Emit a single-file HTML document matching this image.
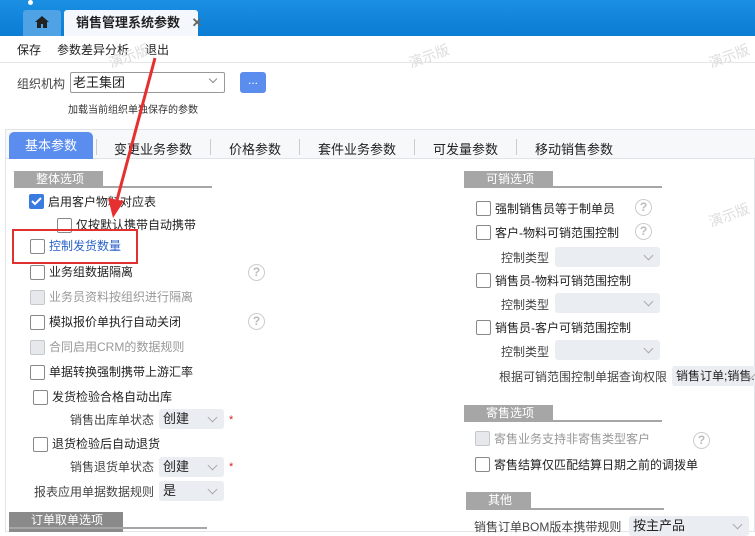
<!DOCTYPE html>
<html><head><meta charset="utf-8"><style>
*{box-sizing:border-box;margin:0;padding:0}
body{width:755px;height:532px;overflow:hidden;background:#fff;font-family:"Liberation Sans","Noto Sans CJK SC",sans-serif;font-size:12px;color:#222;position:relative}
.a{position:absolute;white-space:nowrap}
.cb{position:absolute;width:15px;height:15px;border:1px solid #888;border-radius:2px;background:#fff}
.cb.d{background:#e6e8ec;border-color:#c5c8cc}
.cb.on{background:#3a7be0;border-color:#3a7be0}
.sec{position:absolute;height:16px;background:#a6a6a6;color:#fff;font-size:12px;line-height:16px;padding-left:22px}
.secl{position:absolute;height:2px;background:#a6a6a6}
.sel{position:absolute;height:20px;background:#eaedf2;border-radius:3px;font-size:13px;line-height:20px;padding-left:4px;color:#222}
.sel:after{content:"";position:absolute;right:8px;top:5px;width:6px;height:6px;border-right:1px solid #aaa;border-bottom:1px solid #aaa;transform:rotate(45deg)}
.q{position:absolute;width:17px;height:17px;border:1.5px solid #ccc;border-radius:50%;color:#bbb;font-size:12px;font-weight:bold;text-align:center;line-height:14px}
.g{color:#999}
.star{position:absolute;color:#d22;font-size:11px}
</style></head><body>
<div class="a" style="left:0;top:0;width:755px;height:36px;background:linear-gradient(#1b8fe2,#0a7dd4)"></div>
<div class="a" style="left:28px;top:0;width:5px;height:5px;border-radius:50%;background:#fff"></div>
<div class="a" style="left:23px;top:10px;width:38px;height:26px;background:#4fa3e4;border-radius:3px 3px 0 0"></div>
<svg class="a" style="left:35px;top:16px" width="14" height="12" viewBox="0 0 14 12"><path d="M7 0L0 6h2v6h4V8h2v4h4V6h2z" fill="#222"/></svg>
<div class="a" style="left:64px;top:10px;width:134px;height:26px;background:#f4f8fc;border-radius:3px 3px 0 0;font-size:13px;line-height:25px;padding-left:12px;font-weight:bold;color:#222">销售管理系统参数 <span style="color:#666;margin-left:8px;font-size:13px">✕</span></div>
<div class="a" style="left:0;top:62px;width:755px;height:1px;background:#e4e6ea"></div>
<div class="a" style="left:17px;top:41px">保存</div>
<div class="a" style="left:57px;top:41px">参数差异分析</div>
<div class="a" style="left:145px;top:41px">退出</div>
<div class="a" style="left:17px;top:75px;color:#444">组织机构</div>
<div class="a" style="left:70px;top:72px;width:155px;height:21px;border:1px solid #999;border-radius:2px;font-size:13px;line-height:19px;padding-left:2px">老王集团</div>
<div class="a" style="left:210px;top:76px;width:6px;height:6px;border-right:1px solid #888;border-bottom:1px solid #888;transform:rotate(45deg)"></div>
<div class="a" style="left:240px;top:72px;width:26px;height:21px;background:#5b8def;border-radius:3px;color:#fff;text-align:center;line-height:17px">...</div>
<div class="a" style="left:68px;top:101px;font-size:10px;color:#333">加载当前组织单独保存的参数</div>
<div class="a" style="left:5px;top:129px;width:750px;height:403px;border:1px solid #e0e3e8;background:#fff"></div>
<div class="a" style="left:6px;top:130px;width:749px;height:29px;background:#f7f8fa;border-bottom:1px solid #e0e3e8"></div>
<div class="a" style="left:9px;top:132px;width:84px;height:27px;background:#5b8def;border-radius:5px 5px 0 0;color:#fff;font-size:13px;line-height:27px;text-align:center">基本参数</div>
<div class="a" style="left:114px;top:139px;font-size:13px">变更业务参数</div>
<div class="a" style="left:229px;top:139px;font-size:13px">价格参数</div>
<div class="a" style="left:318px;top:139px;font-size:13px">套件业务参数</div>
<div class="a" style="left:433px;top:139px;font-size:13px">可发量参数</div>
<div class="a" style="left:535px;top:139px;font-size:13px">移动销售参数</div>
<div class="a" style="left:96px;top:139px;width:1px;height:16px;background:#ccc"></div>
<div class="a" style="left:210px;top:139px;width:1px;height:16px;background:#ccc"></div>
<div class="a" style="left:299px;top:139px;width:1px;height:16px;background:#ccc"></div>
<div class="a" style="left:414px;top:139px;width:1px;height:16px;background:#ccc"></div>
<div class="a" style="left:516px;top:139px;width:1px;height:16px;background:#ccc"></div>

<!-- left -->
<div class="sec" style="left:14px;top:171px;width:89px">整体选项</div><div class="secl" style="left:14px;top:186px;width:198px"></div>
<div class="cb on" style="left:29px;top:194px"></div><svg class="a" style="left:31px;top:197px" width="11" height="9"><path d="M1 4l3 3 6-6" stroke="#fff" stroke-width="2" fill="none"/></svg>
<div class="a" style="left:48px;top:193px">启用客户物料对应表</div>
<div class="cb" style="left:57px;top:218px"></div><div class="a" style="left:76px;top:216px">仅按默认携带自动携带</div>
<div class="cb" style="left:30px;top:239px"></div><div class="a" style="left:49px;top:237px;color:#2a62c9">控制发货数量</div>
<div class="cb" style="left:30px;top:265px"></div><div class="a" style="left:49px;top:263px">业务组数据隔离</div><div class="q" style="left:248px;top:264px">?</div>
<div class="cb d" style="left:30px;top:290px"></div><div class="a g" style="left:49px;top:288px">业务员资料按组织进行隔离</div>
<div class="cb" style="left:30px;top:315px"></div><div class="a" style="left:49px;top:313px">模拟报价单执行自动关闭</div><div class="q" style="left:248px;top:313px">?</div>
<div class="cb d" style="left:30px;top:340px"></div><div class="a g" style="left:49px;top:338px">合同启用CRM的数据规则</div>
<div class="cb" style="left:30px;top:365px"></div><div class="a" style="left:49px;top:363px">单据转换强制携带上游汇率</div>
<div class="cb" style="left:33px;top:390px"></div><div class="a" style="left:52px;top:388px">发货检验合格自动出库</div>
<div class="a" style="left:70px;top:411px;color:#444">销售出库单状态</div><div class="sel" style="left:159px;top:409px;width:65px">创建</div><div class="star" style="left:229px;top:414px">*</div>
<div class="cb" style="left:33px;top:437px"></div><div class="a" style="left:52px;top:435px">退货检验后自动退货</div>
<div class="a" style="left:70px;top:458px;color:#444">销售退货单状态</div><div class="sel" style="left:159px;top:457px;width:65px">创建</div><div class="star" style="left:229px;top:461px">*</div>
<div class="a" style="left:34px;top:483px;color:#444">报表应用单据数据规则</div><div class="sel" style="left:159px;top:481px;width:65px">是</div>
<div class="sec" style="left:9px;top:512px;width:114px;height:20px;background:#8a8a8a">订单取单选项</div><div class="secl" style="left:9px;top:527px;width:198px"></div>

<!-- right -->
<div class="sec" style="left:464px;top:171px;width:89px">可销选项</div><div class="secl" style="left:464px;top:186px;width:198px"></div>
<div class="cb" style="left:476px;top:201px"></div><div class="a" style="left:495px;top:200px">强制销售员等于制单员</div><div class="q" style="left:635px;top:199px">?</div>
<div class="cb" style="left:476px;top:225px"></div><div class="a" style="left:495px;top:224px">客户-物料可销范围控制</div><div class="q" style="left:635px;top:223px">?</div>
<div class="a" style="left:501px;top:249px;color:#444">控制类型</div><div class="sel" style="left:555px;top:247px;width:105px"></div>
<div class="cb" style="left:476px;top:273px"></div><div class="a" style="left:495px;top:272px">销售员-物料可销范围控制</div>
<div class="a" style="left:501px;top:296px;color:#444">控制类型</div><div class="sel" style="left:555px;top:293px;width:105px"></div>
<div class="cb" style="left:476px;top:320px"></div><div class="a" style="left:495px;top:319px">销售员-客户可销范围控制</div>
<div class="a" style="left:501px;top:343px;color:#444">控制类型</div><div class="sel" style="left:555px;top:340px;width:105px"></div>
<div class="a" style="left:499px;top:368px;color:#444">根据可销范围控制单据查询权限</div><div class="sel" style="left:672px;top:366px;width:90px;font-size:12px">销售订单;销售..</div>
<div class="sec" style="left:464px;top:405px;width:89px">寄售选项</div><div class="secl" style="left:464px;top:420px;width:198px"></div>
<div class="cb d" style="left:475px;top:431px"></div><div class="a g" style="left:494px;top:430px">寄售业务支持非寄售类型客户</div><div class="q" style="left:693px;top:432px">?</div>
<div class="cb" style="left:475px;top:457px"></div><div class="a" style="left:494px;top:456px">寄售结算仅匹配结算日期之前的调拨单</div>
<div class="sec" style="left:466px;top:492px;width:65px">其他</div><div class="secl" style="left:466px;top:508px;width:198px"></div>
<div class="a" style="left:474px;top:518px;color:#444">销售订单BOM版本携带规则</div><div class="sel" style="left:629px;top:516px;width:120px">按主产品</div>

<!-- watermarks -->
<div class="a" style="left:108px;top:46px;color:#ddd;font-size:14px;transform:rotate(-20deg)">演示版</div>
<div class="a" style="left:408px;top:46px;color:#ddd;font-size:14px;transform:rotate(-20deg)">演示版</div>
<div class="a" style="left:708px;top:46px;color:#ddd;font-size:14px;transform:rotate(-20deg)">演示版</div>
<div class="a" style="left:708px;top:205px;color:#ddd;font-size:14px;transform:rotate(-20deg)">演示版</div>

<!-- annotation -->
<div class="a" style="left:12px;top:229px;width:126px;height:35px;border:2px solid #e03030"></div>
<svg class="a" style="left:0;top:0" width="755" height="532"><line x1="155" y1="58" x2="117" y2="200" stroke="#e63030" stroke-width="3"/><path d="M108 198L113 218L124 201Z" fill="#e63030"/></svg>
</body></html>
